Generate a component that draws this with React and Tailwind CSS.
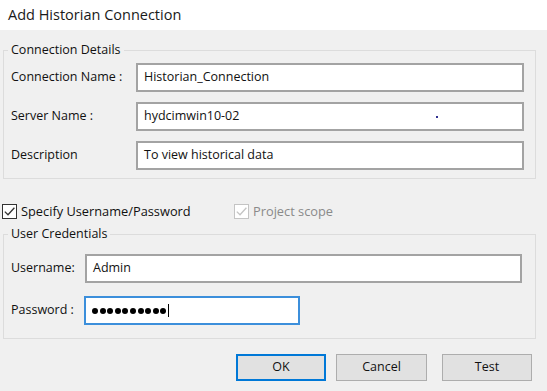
import React from "react";

function CheckBox({ checked, disabled }) {
  const stroke = disabled ? "#c4c4c4" : "#333333";
  return (
    <span
      className={`inline-flex h-[15px] w-[15px] shrink-0 items-center justify-center border bg-white ${
        disabled ? "border-[#c4c4c4]" : "border-[#333333]"
      }`}
    >
      {checked && (
        <svg width="13" height="13" viewBox="0 0 13 13">
          <path d="M1.8 6.6 L5 9.8 L11.4 2.8" fill="none" stroke={stroke} strokeWidth="1.3" />
        </svg>
      )}
    </span>
  );
}

function Field({ label, value, labelWidth, inputWidth, focused, children }) {
  return (
    <div className="flex items-center">
      <span className="shrink-0 pl-[7px]" style={{ width: labelWidth }}>
        {label}
      </span>
      <div
        className={`relative flex h-[29px] items-center px-[6px] bg-white ${
          focused ? "border-2 border-[#3c8fdb]" : "border-2 border-[#a3a3a3]"
        }`}
        style={{ width: inputWidth }}
      >
        {value}
        {children}
      </div>
    </div>
  );
}

export default function App() {
  return (
    <div
      className="flex h-[391px] w-[547px] flex-col bg-[#f0f0f0] text-[12.5px] text-[#111]"
      style={{ fontFamily: '"Open Sans", "Noto Sans", sans-serif' }}
    >
      <div className="flex h-[30px] items-center bg-white px-[8px] text-[14.5px] text-[#1a1a1a]">
        Add Historian Connection
      </div>

      <fieldset className="mx-[3px] mr-[11px] mt-[12px] border border-[#dcdcdc] pb-[8px] pr-[10px] pt-[5px]">
        <legend className="ml-[4px] px-[3px] leading-[16px]">Connection Details</legend>
        <div className="flex flex-col gap-[10px]">
          <Field label="Connection Name :" value="Historian_Connection" labelWidth={132} inputWidth={388} />
          <Field label="Server Name :" value="hydcimwin10-02" labelWidth={132} inputWidth={388}>
            <span className="absolute left-[298px] top-[12px] h-[2px] w-[2px] bg-[#303090]" />
          </Field>
          <Field label="Description" value="To view historical data" labelWidth={132} inputWidth={388} />
        </div>
      </fieldset>

      <div className="mt-[23px] flex items-center">
        <div className="flex w-[234px] items-center gap-[4px] pl-[2px] text-[12.8px]">
          <CheckBox checked />
          <span>Specify Username/Password</span>
        </div>
        <div className="flex items-center gap-[4px] text-[12.8px] text-[#8a8a8a]">
          <CheckBox checked disabled />
          <span>Project scope</span>
        </div>
      </div>

      <fieldset className="mx-[3px] mr-[11px] mt-[5px] border border-[#dcdcdc] pb-[13px] pr-[12px] pt-[12px]">
        <legend className="ml-[4px] px-[3px] leading-[16px]">User Credentials</legend>
        <div className="flex flex-col gap-[13px]">
          <Field label="Username:" value="Admin" labelWidth={81} inputWidth={437} />
          <Field
            label="Password :"
            value={
              <span className="flex gap-[1.6px]">
                {Array.from({ length: 10 }).map((_, i) => (
                  <span key={i} className="h-[6px] w-[6px] rounded-full bg-black" />
                ))}
              </span>
            }
            labelWidth={80}
            inputWidth={216}
            focused
          >
            <span className="ml-[2px] h-[13px] w-[1px] bg-black" />
          </Field>
        </div>
      </fieldset>

      <div className="mt-[15px] flex justify-end gap-[10px] pr-[15px]">
        <button className="h-[27px] w-[90px] border-2 border-[#0078d7] bg-[#e1e1e1]">OK</button>
        <button className="h-[27px] w-[91px] border border-[#adadad] bg-[#e1e1e1]">Cancel</button>
        <button className="ml-[5px] h-[27px] w-[90px] border border-[#adadad] bg-[#e1e1e1]">Test</button>
      </div>
    </div>
  );
}
